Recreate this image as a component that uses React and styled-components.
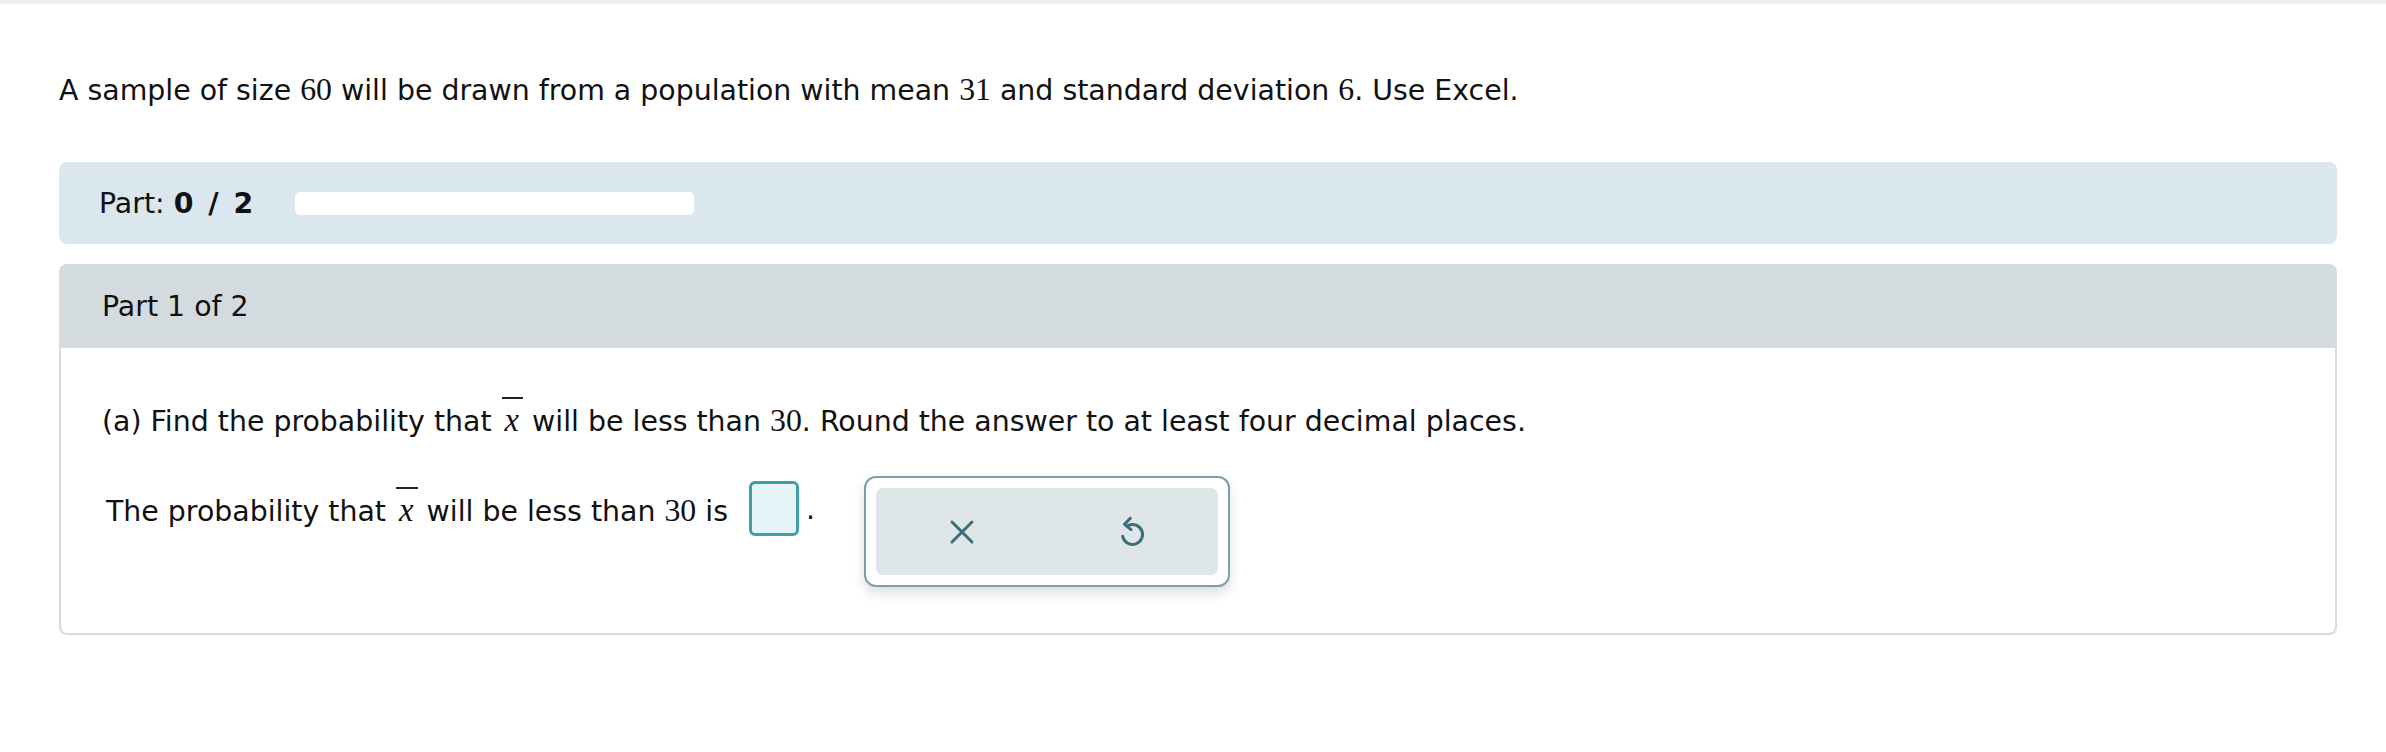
import React from "react";
import styled, { createGlobalStyle } from "styled-components";

const Global = createGlobalStyle`
  html, body { margin: 0; padding: 0; background: #fff; }
  body {
    font-family: "DejaVu Sans", Verdana, sans-serif;
    font-size: 28.4px;
    color: #111;
  }
`;

const TopStrip = styled.div`
  height: 4px;
  background: #eef1f3;
`;

const Page = styled.div`
  padding: 0 49px 40px 59px;
`;

const Intro = styled.p`
  margin: 66px 0 0;
  line-height: 40px;
`;

const M = styled.span`
  font-family: "Liberation Serif", "Times New Roman", serif;
  font-size: 1.12em;
`;

const XBarWrap = styled.span`
  position: relative;
  font-family: "Liberation Serif", "Times New Roman", serif;
  font-style: italic;
  font-size: 1.15em;
  padding: 0 4px;
  &::before {
    content: "";
    position: absolute;
    left: 1px;
    right: 0;
    top: -5px;
    height: 2px;
    background: #222;
  }
`;

const PartBar = styled.div`
  margin-top: 51px;
  height: 82px;
  background: #dae7ef;
  border-radius: 8px;
  display: flex;
  align-items: center;
  padding-left: 40px;
  gap: 40px;
`;

const PartLabel = styled.span`
  white-space: nowrap;
  b {
    font-weight: bold;
    letter-spacing: 2px;
    word-spacing: 1px;
  }
`;

const Progress = styled.div`
  width: 399px;
  height: 23px;
  background: #fff;
  border-radius: 5px;
`;

const Card = styled.div`
  margin-top: 20px;
`;

const CardHeader = styled.div`
  height: 84px;
  background: #d3dbde;
  border-radius: 8px 8px 0 0;
  display: flex;
  align-items: center;
  padding-left: 43px;
`;

const CardBody = styled.div`
  border: 2px solid #d3dce0;
  border-top: none;
  border-radius: 0 0 8px 8px;
  padding: 52px 41px 46px;
`;

const Question = styled.p`
  margin: 0;
  line-height: 40px;
`;

const AnswerRow = styled.div`
  display: flex;
  align-items: flex-start;
  margin-top: 34px;
  padding-left: 4px;
`;

const AnswerText = styled.span`
  line-height: 40px;
  margin-top: 14px;
  white-space: nowrap;
`;

const InputBox = styled.div`
  box-sizing: border-box;
  width: 50px;
  height: 55px;
  margin-top: 5px;
  margin-left: 21px;
  border: 3px solid #3b9fac;
  border-radius: 6px;
  background: #e6f4f8;
`;

const Period = styled.span`
  line-height: 40px;
  margin-top: 14px;
  margin-left: 7px;
`;

const ToolPanel = styled.div`
  box-sizing: border-box;
  margin-left: 49px;
  width: 366px;
  height: 111px;
  padding: 10px;
  border: 2px solid #7d9ea6;
  border-radius: 12px;
  background: #fff;
  box-shadow: 0 6px 12px rgba(30, 60, 70, 0.16);
`;

const ToolInner = styled.div`
  height: 100%;
  background: #dfe6e8;
  border-radius: 7px;
  display: grid;
  grid-template-columns: 1fr 1fr;
`;

const ToolButton = styled.button`
  border: none;
  background: transparent;
  display: flex;
  align-items: center;
  justify-content: center;
  padding: 0;
  cursor: pointer;
`;

const XIcon = () => (
  <svg width="26" height="26" viewBox="0 0 26 26" fill="none">
    <path d="M3 3 L23 23 M23 3 L3 23" stroke="#3b6d78" strokeWidth="3" strokeLinecap="round" />
  </svg>
);

const UndoIcon = () => (
  <svg width="28" height="34" viewBox="18 11 28 34" fill="none">
    <path
      d="M27 21.6 A10 10 0 1 1 21.7 32.3"
      stroke="#3b6d78"
      strokeWidth="3"
      strokeLinecap="round"
    />
    <path
      d="M29.3 14.2 L23.5 20.3 L30 25.6"
      stroke="#3b6d78"
      strokeWidth="3"
      strokeLinecap="round"
      strokeLinejoin="round"
    />
  </svg>
);

const XBar = () => <XBarWrap>x</XBarWrap>;

export default function App() {
  return (
    <>
      <Global />
      <TopStrip />
      <Page>
        <Intro>
          A sample of size <M>60</M> will be drawn from a population with mean <M>31</M> and
          standard deviation <M>6</M>. Use Excel.
        </Intro>
        <PartBar>
          <PartLabel>
            Part: <b>0 / 2</b>
          </PartLabel>
          <Progress />
        </PartBar>
        <Card>
          <CardHeader>Part 1 of 2</CardHeader>
          <CardBody>
            <Question>
              (a) Find the probability that <XBar /> will be less than <M>30</M>. Round the answer
              to at least four decimal places.
            </Question>
            <AnswerRow>
              <AnswerText>
                The probability that <XBar /> will be less than <M>30</M> is
              </AnswerText>
              <InputBox />
              <Period>.</Period>
              <ToolPanel>
                <ToolInner>
                  <ToolButton aria-label="Clear">
                    <XIcon />
                  </ToolButton>
                  <ToolButton aria-label="Undo">
                    <UndoIcon />
                  </ToolButton>
                </ToolInner>
              </ToolPanel>
            </AnswerRow>
          </CardBody>
        </Card>
      </Page>
    </>
  );
}
